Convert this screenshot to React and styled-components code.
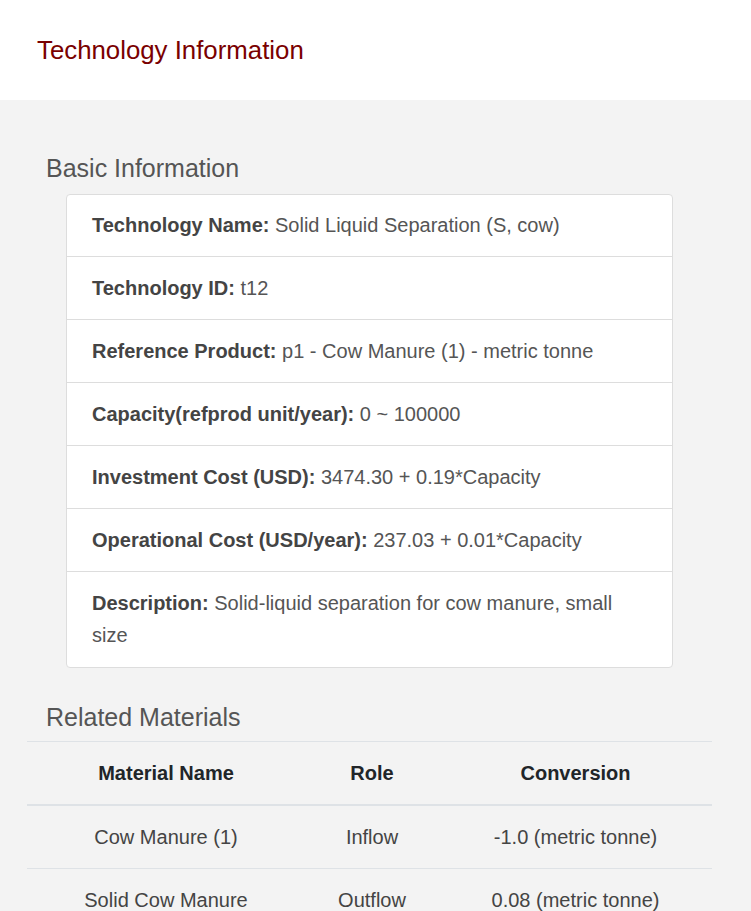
import React from 'react';
import styled, { createGlobalStyle } from 'styled-components';

const GlobalStyle = createGlobalStyle`
  html, body {
    margin: 0;
    padding: 0;
    background: #f3f3f3;
    font-family: 'Liberation Sans', Arial, sans-serif;
  }
`

const Page = styled.div`
  min-height: 911px;
  background: #f3f3f3;
`

const Header = styled.header`
  height: 100px;
  background: #ffffff;
  display: flex;
  align-items: center;
  padding-left: 37px;
  box-sizing: border-box;
`

const Title = styled.h1`
  margin: 0;
  font-size: 25.8px;
  font-weight: normal;
  color: #7a0000;
`

const Content = styled.main`
  margin-left: 27px;
  width: 685px;
  padding-top: 54px;
`

const SectionHeading = styled.h3`
  margin: ${p => p.$top || 0}px 0 ${p => p.$bottom || 0}px 19px;
  font-size: 25px;
  line-height: 28px;
  font-weight: normal;
  color: #555555;
`

const Card = styled.ul`
  list-style: none;
  margin: 0 39px;
  padding: 0;
  background: #ffffff;
  border: 1px solid #dddddd;
  border-radius: 4px;
`

const Item = styled.li`
  padding: 15px 25px;
  font-size: 20px;
  line-height: 32px;
  color: #555555;
  & + & {
    border-top: 1px solid #dddddd;
  }
  &:first-child {
    padding-top: 14px;
  }
  &:last-child {
    padding-bottom: 16px;
  }
`

const Label = styled.b`
  color: #444444;
`

const Table = styled.table`
  width: 685px;
  border-collapse: collapse;
  font-size: 20px;
  line-height: 32px;
`

const Th = styled.th`
  padding: 15px 0;
  border-top: 1px solid #dee2e6;
  border-bottom: 2px solid #dee2e6;
  color: #212529;
  font-weight: bold;
  text-align: center;
  width: ${p => p.$w}px;
`

const Td = styled.td`
  padding: 15px 0;
  border-top: 1px solid #dee2e6;
  color: #444444;
  text-align: center;
`

const info = [
  ['Technology Name:', 'Solid Liquid Separation (S, cow)'],
  ['Technology ID:', 't12'],
  ['Reference Product:', 'p1 - Cow Manure (1) - metric tonne'],
  ['Capacity(refprod unit/year):', '0 ~ 100000'],
  ['Investment Cost (USD):', '3474.30 + 0.19*Capacity'],
  ['Operational Cost (USD/year):', '237.03 + 0.01*Capacity'],
  ['Description:', 'Solid-liquid separation for cow manure, small size'],
];

const materials = [
  ['Cow Manure (1)', 'Inflow', '-1.0 (metric tonne)'],
  ['Solid Cow Manure', 'Outflow', '0.08 (metric tonne)'],
];

const App = () => {
  return (
    <Page>
      <GlobalStyle />
      <Header>
        <Title>Technology Information</Title>
      </Header>
      <Content>
        <SectionHeading $bottom={12}>Basic Information</SectionHeading>
        <Card>
          {info.map(([label, value], idx) => (
            <Item key={idx}><Label>{label}</Label> {value}</Item>
          ))}
        </Card>
        <SectionHeading $top={35} $bottom={10}>Related Materials</SectionHeading>
        <Table>
          <thead>
            <tr>
              <Th $w={278}>Material Name</Th>
              <Th $w={134}>Role</Th>
              <Th $w={273}>Conversion</Th>
            </tr>
          </thead>
          <tbody>
            {materials.map((row, idx) => (
              <tr key={idx}>
                {row.map((cell, i) => <Td key={i}>{cell}</Td>)}
              </tr>
            ))}
          </tbody>
        </Table>
      </Content>
    </Page>
  )
}

export default App;
